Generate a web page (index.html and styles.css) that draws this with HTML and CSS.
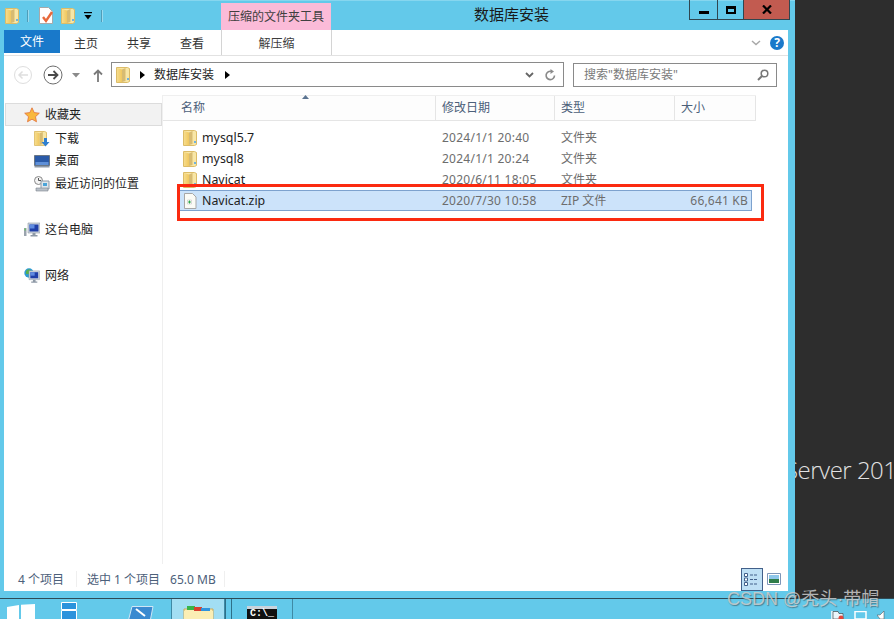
FILE: index.html
```html
<!DOCTYPE html>
<html lang="zh-CN">
<head>
<meta charset="utf-8">
<title>数据库安装</title>
<link rel="stylesheet" href="styles.css">
</head>
<body>
<svg class="defs" width="0" height="0">
  <defs>
    <linearGradient id="fg" x1="0" y1="0" x2="1" y2="0"><stop offset="0" stop-color="#f6dc8c"/><stop offset="1" stop-color="#f0c75e"/></linearGradient>
    <symbol id="folder" viewBox="0 0 14 17">
      <path d="M.5 1.500h11l2 1v13l-2 1H.5z" fill="#f8e6a6" stroke="#dcbc68"/>
      <path d="M1 2l5 1.500V16H1z" fill="url(#fg)"/>
      <path d="M6 3.500 9.500 2v13L6 16z" fill="#d7bb72"/>
      <path d="M11 12h2v2h-2z" fill="#6fb3e0"/>
    </symbol>
    <symbol id="pc" viewBox="0 0 16 16">
      <path d="M4 1h12v10H4z" fill="#cfd6de" stroke="#8e99a6" stroke-width=".6"/>
      <path d="M5.500 2.500h9v7h-9z" fill="#1f3fa8"/>
      <path d="M5.500 2.500h5v4h-5z" fill="#5f8be0"/>
      <path d="M8.500 11h3v2h2v1.500h-7V13h2z" fill="#8e99a6"/>
    </symbol>
  </defs>
</svg>
<div class="screen">
  <div class="upper">
    <div class="window">
      <div class="titlebar">
        <div class="qat">
          <svg class="q-folder1" width="14" height="17"><use href="#folder"/></svg>
          <span class="q-sep q-sep1"></span>
          <svg class="q-doc" width="15" height="17" viewBox="0 0 15 17"><path d="M.5.500h9l4 4v12H.5z" fill="#fff" stroke="#a9a9a9"/><path d="M4 10l3 4 6-9" fill="none" stroke="#e8693c" stroke-width="2.400"/></svg>
          <svg class="q-folder2" width="14" height="17"><use href="#folder"/></svg>
          <svg class="q-drop" width="8" height="8" viewBox="0 0 8 8"><path d="M0 0h8v1.200H0z"/><path d="M.5 3h7L4 7.500z"/></svg>
          <span class="q-sep q-sep2"></span>
        </div>
        <div class="ctx-tab">压缩的文件夹工具</div>
        <div class="win-title">数据库安装</div>
        <div class="controls">
          <div class="ctl ctl-min"><span class="min-glyph"></span></div>
          <div class="ctl ctl-max"><span class="max-glyph"></span></div>
          <div class="ctl ctl-close"><svg width="10" height="9" viewBox="0 0 10 9"><path d="M1 .5l8 8M9 .5l-8 8" stroke="#000" stroke-width="2.200"/></svg></div>
        </div>
      </div>
      <div class="pane-white">
        <div class="ribbon">
          <div class="tab-file">文件</div>
          <div class="tab tab-home">主页</div>
          <div class="tab tab-share">共享</div>
          <div class="tab tab-view">查看</div>
          <div class="tab tab-extract">解压缩</div>
          <svg class="chev" width="10" height="6" viewBox="0 0 10 6"><path d="M1 1l4 3.500L9 1" fill="none" stroke="#a8a8a8" stroke-width="1.500"/></svg>
          <div class="help">?</div>
        </div>
        <div class="navbar">
          <svg class="nav-back" width="20" height="20" viewBox="0 0 20 20"><circle cx="10" cy="10" r="8.500" fill="none" stroke="#dedede"/><path d="M15 10H6M9.500 6.500 6 10l3.500 3.500" fill="none" stroke="#dedede" stroke-width="1.500"/></svg>
          <svg class="nav-fwd" width="20" height="20" viewBox="0 0 20 20"><circle cx="10" cy="10" r="9" fill="none" stroke="#6d6d6d"/><path d="M5 10h9M10.500 6l4 4-4 4" fill="none" stroke="#4a4a4a" stroke-width="1.800"/></svg>
          <svg class="nav-drop" width="8" height="5" viewBox="0 0 8 5"><path d="M0 0h8L4 4.500z" fill="#8a8a8a"/></svg>
          <svg class="nav-up" width="10" height="13" viewBox="0 0 10 13"><path d="M5 13V2M1 5.500 5 1.500l4 4" fill="none" stroke="#7a7a7a" stroke-width="1.800"/></svg>
          <div class="address">
            <svg class="addr-folder" width="14" height="17"><use href="#folder"/></svg>
            <svg class="crumb" width="5" height="8" viewBox="0 0 5 8"><path d="M0 0l5 4-5 4z"/></svg>
            <span class="addr-text">数据库安装</span>
            <svg class="crumb crumb-end" width="5" height="8" viewBox="0 0 5 8"><path d="M0 0l5 4-5 4z"/></svg>
            <svg class="addr-down" width="9" height="6" viewBox="0 0 9 6"><path d="M1 1l3.500 3.500L8 1" fill="none" stroke="#666" stroke-width="1.800"/></svg>
            <svg class="addr-refresh" width="11" height="12" viewBox="0 0 11 12"><path d="M9.500 6.500A4.200 4.200 0 1 1 6 2.300" fill="none" stroke="#8a8a8a" stroke-width="1.600"/><path d="M5.500 0v5L9 2.500z" fill="#8a8a8a"/></svg>
          </div>
          <div class="search">
            <span class="search-text">搜索"数据库安装"</span>
            <svg width="12" height="12" viewBox="0 0 12 12"><circle cx="7.500" cy="4.500" r="3.300" fill="none" stroke="#777" stroke-width="1.500"/><path d="M5 7l-4 4" stroke="#777" stroke-width="2"/></svg>
          </div>
        </div>
        <div class="panes">
          <nav class="sidebar">
            <div class="side-item side-fav">
              <svg width="16" height="16" viewBox="0 0 16 16"><path d="M8 .8l2.200 4.800 5.100.6-3.800 3.500 1 5.100L8 12.200l-4.500 2.600 1-5.100L.7 6.200l5.100-.6z" fill="#f9b83c" stroke="#e2703a" stroke-width=".8"/></svg>
              <span>收藏夹</span>
            </div>
            <div class="side-item side-dl">
              <svg width="16" height="17" viewBox="0 0 16 17"><use href="#folder" width="13" height="16"/><path d="M10 8h3v4h2.500l-4 4.500-4-4.500H10z" fill="#2f7fd0"/></svg>
              <span>下载</span>
            </div>
            <div class="side-item side-desk">
              <svg width="16" height="14" viewBox="0 0 16 14"><path d="M.5 1.500h15v10H.5z" fill="#2a5aa8" stroke="#6b7785"/><path d="M1.500 8h13v3h-13z" fill="#5f90d8"/><path d="M.5 12h15v1.500H.5z" fill="#8e99a6"/></svg>
              <span>桌面</span>
            </div>
            <div class="side-item side-recent">
              <svg width="16" height="16" viewBox="0 0 16 16"><circle cx="4.500" cy="4.500" r="4" fill="#f4f4f4" stroke="#888"/><path d="M4.500 2v2.500H7" fill="none" stroke="#555"/><path d="M7 5h8v8H7z" fill="#dfe6ec" stroke="#8e99a6"/><path d="M9 7h4v3H9z" fill="#4aa3d8"/><path d="M2 12h12v3H2z" fill="#b9c0c8" stroke="#7d858d" stroke-width=".6"/></svg>
              <span>最近访问的位置</span>
            </div>
            <div class="side-item side-pc">
              <svg width="16" height="16" viewBox="0 0 16 16"><use href="#pc"/><path d="M0 6h2.500v8H0z" fill="#9aa3ad"/><path d="M.5 6.500h1.500v2H.5z" fill="#6fc06a"/></svg>
              <span>这台电脑</span>
            </div>
            <div class="side-item side-net">
              <svg width="16" height="16" viewBox="0 0 16 16"><circle cx="5" cy="5" r="4.700" fill="#2f9bd0"/><path d="M2 3l3-2 2 2-2 3H2z" fill="#58b04e"/><use href="#pc" x="1" y="2" width="15" height="14"/></svg>
              <span>网络</span>
            </div>
          </nav>
          <section class="files">
            <div class="header">
              <div class="hcol hname">名称<svg class="sort" width="7" height="4" viewBox="0 0 7 4"><path d="M0 4l3.500-4L7 4z" fill="#5b7491"/></svg></div>
              <div class="hcol">修改日期</div>
              <div class="hcol">类型</div>
              <div class="hcol hlast">大小</div>
            </div>
            <div class="rows">
              <div class="row"><div class="c-name"><svg width="14" height="17"><use href="#folder"/></svg><span>mysql5.7</span></div><div class="c-date">2024/1/1 20:40</div><div class="c-type">文件夹</div><div class="c-size"></div></div>
              <div class="row"><div class="c-name"><svg width="14" height="17"><use href="#folder"/></svg><span>mysql8</span></div><div class="c-date">2024/1/1 20:24</div><div class="c-type">文件夹</div><div class="c-size"></div></div>
              <div class="row"><div class="c-name"><svg width="14" height="17"><use href="#folder"/></svg><span>Navicat</span></div><div class="c-date">2020/6/11 18:05</div><div class="c-type">文件夹</div><div class="c-size"></div></div>
              <div class="row row-sel"><div class="c-name"><svg width="14" height="16" viewBox="0 0 14 16"><path d="M1.500.5h8l3.500 3.500v11.500H1.500z" fill="#fbfbf6" stroke="#a7a7a7"/><path d="M4.500 7h4v4h-4z" fill="#fff" stroke="#bbb" stroke-width=".5"/><path d="M6.500 7.500v3M5 9h3" stroke="#2fa84a"/></svg><span>Navicat.zip</span></div><div class="c-date">2020/7/30 10:58</div><div class="c-type">ZIP 文件</div><div class="c-size">66,641 KB</div></div>
            </div>
          </section>
        </div>
        <div class="status">
          <span class="st-count">4 个项目</span>
          <span class="st-sep"></span>
          <span class="st-sel">选中 1 个项目</span>
          <span class="st-size">65.0 MB</span>
          <span class="st-sep st-sep2"></span>
          <div class="viewbtn">
            <svg width="15" height="13" viewBox="0 0 15 13"><path d="M.5.500h3v3h-3zM.5 5h3v3h-3zM.5 9.500h3v3h-3z" fill="#fff" stroke="#42608a"/><path d="M6 2h8M6 6.500h8M6 11h8" stroke="#42608a" stroke-dasharray="3 1"/></svg>
          </div>
          <svg class="viewpic" width="14" height="12" viewBox="0 0 14 12"><path d="M.5.500h13v11H.5z" fill="#fff" stroke="#7d96b8"/><path d="M2 2h10v4H2z" fill="#8ec7ea"/><path d="M2 6h10v4H2z" fill="#2f7d4a"/></svg>
        </div>
      </div>
    </div>
    <div class="desktop"><div class="server">Server 2012</div></div>
  </div>
  <div class="taskbar">
    <svg class="tb-start" width="28" height="16" viewBox="0 0 28 16"><path d="M0 3l12-2v15H0zM14 .7 28 0v16H14z" fill="#fff"/></svg>
    <svg class="tb-srv" width="16" height="20" viewBox="0 0 16 20"><path d="M.5.500h15v7H.5zM.5 8.500h15v11H.5z" fill="#2b93dc" stroke="#fff"/></svg>
    <svg class="tb-ps" width="26" height="14" viewBox="0 0 26 14"><path d="M4 .5h21L22 16H0z" fill="#3a8ad0" stroke="#cfe6f5"/><path d="M8 3l9 7" stroke="#fff" stroke-width="2"/></svg>
    <div class="tb-explorer">
      <svg width="31" height="15" viewBox="0 0 31 15"><path d="M1 3h29v14H1z" fill="#fbeeb4" stroke="#c9a95a"/><path d="M4 0h8v4H4z" fill="#38b549"/><path d="M11 1h8v4h-8z" fill="#d8412f"/><path d="M18 2h9v4h-9z" fill="#2f93dd"/><path d="M1 5h29v12H1z" fill="#fbeeb4"/></svg>
    </div>
    <span class="tb-gap"></span>
    <div class="tb-cmd">
      <svg width="30" height="14" viewBox="0 0 30 14"><path d="M0 0h30v14H0z" fill="#111"/><path d="M0 0h30v3H0z" fill="#c9d3dc"/></svg>
      <span class="cmd-text">C:\_</span>
    </div>
    <div class="tray">
      <svg width="13" height="8" viewBox="0 0 13 8"><path d="M1 0v8" stroke="#fff" stroke-width="1.500"/><path d="M2 .5h5l1 2h4V8H2z" fill="#eaf6fb" stroke="#333" stroke-width=".6"/><circle cx="10" cy="7" r="2.500" fill="#e2453a"/></svg>
      <svg width="13" height="8" viewBox="0 0 13 8"><path d="M1 .5h11V8H1z" fill="#63c9ea" stroke="#fff" stroke-width="1.500"/></svg>
      <svg width="10" height="8" viewBox="0 0 10 8"><path d="M0 4h3l4-4v8H3z" fill="#fff" stroke="#444" stroke-width=".5"/></svg>
    </div>
  </div>
  <div class="redbox"></div>
  <div class="watermark">CSDN @秃头·带帽</div>
</div>
</body>
</html>
```
FILE: styles.css
```css
* { box-sizing: border-box; }
html, body { margin: 0; padding: 0; }
body { width: 894px; height: 619px; overflow: hidden; background: #2d2d2d; font-family: "Noto Sans", "Noto Sans CJK SC", sans-serif; font-size: 12px; line-height: 16px; color: #1e1e1e; }
svg { display: block; flex: none; }
.defs { position: absolute; }
.screen { position: relative; width: 894px; height: 619px; display: flex; flex-direction: column; overflow: hidden; }
.upper { height: 598px; display: flex; }

.window { width: 795px; background: #63c9ea; display: flex; flex-direction: column; border-top: 1px solid #86d6ef; }
.titlebar { height: 29px; display: flex; align-items: flex-start; }
.qat { width: 221px; height: 29px; display: flex; align-items: center; padding-left: 5px; }
.q-sep { width: 2px; height: 12px; background: #9adbef; border: 0 solid #4f9db8; border-left-width: 1px; }
.q-sep1 { margin-left: 8px; }
.q-doc { margin-left: 10px; }
.q-folder2 { margin-left: 7px; }
.q-drop { margin-left: 9px; }
.q-sep2 { margin-left: 9px; }
.ctx-tab { width: 110px; height: 27px; margin-top: 2px; background: #fbbbd8; color: #404040; text-align: center; line-height: 27px; }
.win-title { flex: 1; padding-left: 143px; font-size: 15px; line-height: 27px; color: #1a1a1a; }
.controls { width: 101px; height: 20px; margin-right: 5px; margin-top: -1px; display: flex; border: 1px solid #2f4650; border-top: 0; }
.ctl { display: flex; align-items: center; justify-content: center; border-right: 1px solid #2f4650; }
.ctl-min { width: 28px; }
.ctl-max { width: 26px; }
.ctl-close { flex: 1; background: #c25b50; border-right: 0; }
.min-glyph { width: 10px; height: 3px; margin-top: 5px; background: #000; }
.max-glyph { width: 10px; height: 8px; border: 2px solid #000; border-top-width: 3px; }

.pane-white { margin: 0 7px 7px 4px; height: 561px; background: #fff; display: flex; flex-direction: column; }
.ribbon { height: 26px; display: flex; align-items: flex-start; border-bottom: 1px solid #e2e2e2; }
.tab-file { width: 56px; height: 23px; flex: none; background: #1979ca; color: #fff; text-align: center; line-height: 24px; }
.tab { line-height: 27px; color: #333; flex: none; white-space: nowrap; }
.tab-home { margin-left: 14px; }
.tab-share { margin-left: 29px; }
.tab-view { margin-left: 29px; }
.tab-extract { width: 111px; height: 25px; margin-left: 17px; text-align: center; color: #3d3d3d; border: 0 solid #d4d4d4; border-width: 0 1px; }
.chev { margin: 10px 0 0 419px; }
.help { width: 14px; height: 14px; flex: none; margin: 6px 0 0 9px; border-radius: 50%; background: #1979ca; color: #fff; font-weight: 700; font-size: 12px; line-height: 14px; text-align: center; }

.navbar { height: 39px; display: flex; align-items: flex-start; padding-top: 6px; }
.nav-back { margin: 3px 0 0 9px; }
.nav-fwd { margin: 3px 0 0 10px; }
.nav-drop { margin: 11px 0 0 9px; }
.nav-up { margin: 7px 0 0 13px; }
.address { width: 453px; height: 25px; margin-left: 8px; border: 1px solid #8a8a8a; display: flex; align-items: center; padding-left: 4px; }
.crumb { margin-left: 10px; }
.addr-text { margin-left: 9px; color: #1e1e1e; white-space: nowrap; }
.crumb-end { margin-left: 11px; }
.addr-down { margin-left: 295px; }
.addr-refresh { margin-left: 11px; }
.search { width: 204px; height: 24px; margin: 1px 0 0 9px; border: 1px solid #8a8a8a; display: flex; align-items: center; justify-content: space-between; padding: 0 7px 0 10px; }
.search-text { color: #7a7a7a; }

.panes { flex: 1; display: flex; min-height: 0; }
.sidebar { width: 159px; border-right: 1px solid #efefef; padding-top: 8px; display: flex; flex-direction: column; }
.side-item { display: flex; align-items: center; gap: 5px; color: #1e1e1e; height: 23px; flex: none; }
.side-fav { width: 157px; margin-left: 1px; padding-left: 18px; gap: 5px; background: #f2f2f2; border: 1px solid #dcdcdc; }
.side-dl { margin-top: 1px; padding-left: 30px; }
.side-desk { margin-top: -1px; padding-left: 30px; }
.side-recent { padding-left: 30px; }
.side-pc { margin-top: 23px; padding-left: 20px; }
.side-net { margin-top: 23px; padding-left: 20px; }

.files { flex: 1; }
.header { width: 593px; height: 26px; display: grid; grid-template-columns: 273px 119px 120px 81px; border-top: 1px solid #efefef; border-bottom: 1px solid #e5e5e5; background: #fdfdfd; }
.hcol { padding-left: 6px; line-height: 24px; color: #4c607a; border-right: 1px solid #e5e5e5; }
.hname { padding-left: 18px; position: relative; }
.sort { position: absolute; left: 139px; top: -1px; }
.rows { padding: 6px 0 0 16px; }
.row { width: 573px; height: 21px; display: grid; grid-template-columns: 257px 119px 120px 77px; align-items: center; color: #6d6d6d; }
.c-name { display: flex; align-items: center; gap: 5px; padding-left: 4px; color: #1e1e1e; font-size: 12.4px; height: 21px; overflow: hidden; }
.c-date { padding-left: 6px; letter-spacing: .25px; }
.c-type { padding-left: 6px; }
.c-size { text-align: right; padding-right: 4px; letter-spacing: .2px; }
.row-sel { background: #cce3fa; box-shadow: inset 0 0 0 1px #7da2ce; }

.status { height: 27px; display: flex; align-items: flex-start; color: #4c607a; padding: 4px 0 0 14px; }
.st-count { width: 58px; margin-top: 4px; }
.st-sep { width: 1px; height: 16px; margin-top: 3px; background: #efefef; }
.st-sel { margin: 4px 0 0 10px; }
.st-size { margin: 4px 0 0 10px; }
.st-sep2 { margin-left: 8px; }
.viewbtn { width: 22px; height: 23px; margin-left: 516px; background: #bfe0f5; border: 1px solid #42608a; display: flex; align-items: center; justify-content: center; }
.viewpic { margin: 5px 0 0 4px; }

.desktop { flex: 1; padding-top: 454px; overflow: hidden; }
.server { margin-left: -10px; white-space: nowrap; color: #e2e2e2; font-family: "Open Sans", sans-serif; font-weight: 300; font-size: 24px; line-height: 32px; letter-spacing: -.5px; }

.taskbar { height: 21px; background: #63c9ea; border-top: 1px solid #2e4b57; display: flex; align-items: flex-start; overflow: hidden; position: relative; }
.tb-start { margin: 5px 0 0 7px; }
.tb-srv { margin: 3px 0 0 26px; }
.tb-ps { margin: 7px 0 0 51px; }
.tb-explorer { width: 54px; height: 20px; flex: none; margin-left: 17px; padding: 7px 0 0 11px; background: #a2def3; border: 0 solid #3f8aa5; border-width: 0 1px; }
.tb-gap { width: 7px; height: 20px; flex: none; border-right: 1px solid #2e6f88; border-left: 1px solid #2e6f88; }
.tb-cmd { width: 60px; height: 20px; flex: none; margin-left: 1px; padding: 7px 0 0 14px; position: relative; border-right: 1px solid #3f8aa5; }
.cmd-text { position: absolute; left: 17px; top: 10px; color: #fff; font-family: "Liberation Mono", monospace; font-size: 10px; line-height: 10px; font-weight: 700; }
.tray { display: flex; gap: 10px; margin: 12px 0 0 538px; }

.redbox { position: absolute; left: 177px; top: 184px; width: 587px; height: 37px; border: 3px solid #fb2a10; }
.watermark { position: absolute; left: 727px; top: 589px; font-family: "Liberation Sans", "Noto Sans CJK SC", sans-serif; font-size: 18px; line-height: 21px; white-space: nowrap; color: rgba(205, 205, 205, .85); text-shadow: 1px 1px 1px rgba(40, 40, 40, .45); }
```
